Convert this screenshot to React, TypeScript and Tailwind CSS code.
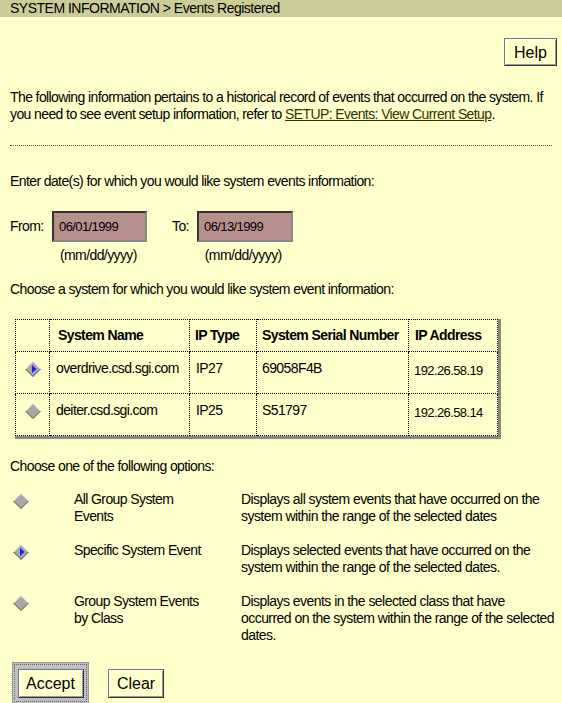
import React from "react";

const font = { fontFamily: '"Liberation Sans", Arial, sans-serif' };

function Diamond({ selected }: { selected?: boolean }) {
  return (
    <svg width="16" height="16" viewBox="0 0 16 16" className="block">
      <polygon points="8,0.5 15.5,8 8,15.5 0.5,8" fill="#a8a8a8" />
      <polyline points="0.5,8 8,0.5 15.5,8" fill="none" stroke="#f4f4f4" strokeWidth="1" />
      <polyline points="0.5,8 8,15.5 15.5,8" fill="none" stroke="#4a4a4a" strokeWidth="1" />
      {selected && <polygon points="7,4 11.5,8 7,12" fill="#1a1aff" />}
    </svg>
  );
}

function Btn({ children, className = "" }: { children: React.ReactNode; className?: string }) {
  return (
    <div
      className={`flex items-center justify-center bg-[#ffffcc] text-black text-[16px] border border-t-[#777] border-l-[#777] border-r-[#333] border-b-[#333] shadow-[inset_1px_1px_0_#fff,inset_-1px_-1px_0_#999] ${className}`}
    >
      {children}
    </div>
  );
}

const options = [
  {
    label: ["All Group System", "Events"],
    desc: ["Displays all system events that have occurred on the", "system within the range of the selected dates"],
    sel: false,
  },
  {
    label: ["Specific System Event"],
    desc: ["Displays selected events that have occurred on the", "system within the range of the selected dates."],
    sel: true,
  },
  {
    label: ["Group System Events", "by Class"],
    desc: [
      "Displays events in the selected class that have",
      "occurred on the system within the range of the selected",
      "dates.",
    ],
    sel: false,
  },
];

export default function App() {
  const cell = "border border-dotted border-black whitespace-nowrap";
  return (
    <div className="w-[562px] h-[703px] bg-[#ffffcc] text-black overflow-hidden text-[14px] leading-[17px] tracking-[-0.6px]" style={font}>
      <div className="h-[17px] bg-[#cccc99] pl-[10px] text-[14px] leading-[17px] tracking-[-0.5px]">
        SYSTEM INFORMATION &gt; Events Registered
      </div>

      <div className="flex justify-end pr-[5px] pt-[21px]">
        <Btn className="w-[53px] h-[28px] tracking-normal">Help</Btn>
      </div>

      <p className="px-[10px] mt-[23px]">
        The following information pertains to a historical record of events that occurred on the system. If you need to see event setup information, refer to{" "}
        <span className="underline text-[#333300]">SETUP: Events: View Current Setup</span>.
      </p>

      <div className="mx-[10px] mt-[22px] border-t border-dotted border-[#555]" />

      <p className="px-[10px] mt-[27px]">Enter date(s) for which you would like system events information:</p>

      <div className="flex items-center px-[10px] mt-[21px]">
        <span className="w-[42px]">From:</span>
        <div className="w-[95px] h-[31px] bg-[#b88f8f] border-2 border-t-[#333] border-l-[#333] border-r-[#888] border-b-[#888] flex items-center pl-[5px] text-[13px]">
          06/01/1999
        </div>
        <span className="ml-[25px] w-[25px]">To:</span>
        <div className="w-[96px] h-[31px] bg-[#b88f8f] border-2 border-t-[#333] border-l-[#333] border-r-[#888] border-b-[#888] flex items-center pl-[5px] text-[13px]">
          06/13/1999
        </div>
      </div>
      <div className="flex mt-[5px]">
        <span className="ml-[60px]">(mm/dd/yyyy)</span>
        <span className="ml-[68px]">(mm/dd/yyyy)</span>
      </div>

      <p className="px-[10px] mt-[17px]">Choose a system for which you would like system event information:</p>

      <div className="ml-[15px] mt-[21px] w-[486px] border-r-[3px] border-b-[3px] border-[#888]">
        <table className="w-full border-collapse border border-dotted border-black">
          <thead>
            <tr className="h-[32px] font-bold">
              <th className={`${cell} w-[34px]`}></th>
              <th className={`${cell} w-[140px] text-left pl-[8px]`}>System Name</th>
              <th className={`${cell} w-[67px] text-left pl-[5px]`}>IP Type</th>
              <th className={`${cell} w-[152px] text-left pl-[5px]`}>System Serial Number</th>
              <th className={`${cell} text-left pl-[6px]`}>IP Address</th>
            </tr>
          </thead>
          <tbody>
            <tr className="h-[42px] align-top">
              <td className={`${cell} pt-[9px]`}><div className="flex justify-center"><Diamond selected /></div></td>
              <td className={`${cell} pl-[6px] pt-[8px]`}>overdrive.csd.sgi.com</td>
              <td className={`${cell} pl-[6px] pt-[8px]`}>IP27</td>
              <td className={`${cell} pl-[5px] pt-[8px]`}>69058F4B</td>
              <td className={`${cell} pl-[5px] pt-[10px] text-[13px]`}>192.26.58.19</td>
            </tr>
            <tr className="h-[42px] align-top">
              <td className={`${cell} pt-[9px]`}><div className="flex justify-center"><Diamond /></div></td>
              <td className={`${cell} pl-[6px] pt-[8px]`}>deiter.csd.sgi.com</td>
              <td className={`${cell} pl-[6px] pt-[8px]`}>IP25</td>
              <td className={`${cell} pl-[5px] pt-[8px]`}>S51797</td>
              <td className={`${cell} pl-[5px] pt-[10px] text-[13px]`}>192.26.58.14</td>
            </tr>
          </tbody>
        </table>
      </div>

      <p className="px-[10px] mt-[19px]">Choose one of the following options:</p>

      <div className="mt-[16px] flex flex-col gap-[17px]">
        {options.map((o, i) => (
          <div key={i} className="flex">
            <div className="w-[74px] pl-[13px] pt-[2px]"><Diamond selected={o.sel} /></div>
            <div className="w-[167px] whitespace-nowrap">
              {o.label.map((l) => (
                <div key={l}>{l}</div>
              ))}
            </div>
            <div className="flex-1 whitespace-nowrap tracking-[-0.55px]">
              {o.desc.map((l) => (
                <div key={l}>{l}</div>
              ))}
            </div>
          </div>
        ))}
      </div>

      <div className="flex items-start mt-[18px] ml-[12px]">
        <div className="w-[77px] h-[42px] bg-[#c0c0c0] border border-[#999] p-[1px]">
          <div className="w-full h-full border border-dotted border-[#666] flex items-center justify-center">
            <Btn className="w-[66px] h-[29px] tracking-normal">Accept</Btn>
          </div>
        </div>
        <Btn className="ml-[19px] mt-[7px] w-[56px] h-[29px] tracking-normal">Clear</Btn>
      </div>
    </div>
  );
}
